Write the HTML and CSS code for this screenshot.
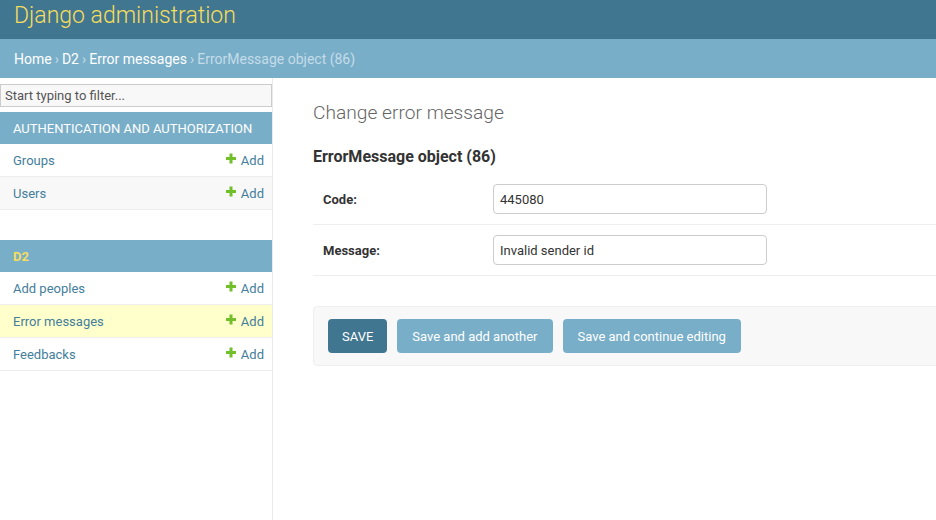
FILE: index.html
```html
<!DOCTYPE html>
<html lang="en">
<head>
<meta charset="utf-8">
<title>Change error message | Django site admin</title>
<link rel="stylesheet" href="styles.css">
</head>
<body>
<div class="header"><span class="brand">Django administration</span></div>
<nav class="breadcrumbs">
  <a href="#">Home</a> <span class="sep">›</span> <a href="#">D2</a> <span class="sep">›</span> <a href="#">Error messages</a> <span class="sep">›</span> <span class="current">ErrorMessage object (86)</span>
</nav>
<div class="main">
  <aside class="sidebar">
    <input class="filter" type="text" placeholder="Start typing to filter...">
    <div class="module">
      <div class="caption">AUTHENTICATION AND AUTHORIZATION</div>
      <div class="row"><a class="model" href="#">Groups</a><a class="add" href="#"><svg width="10" height="11" viewBox="0 0 10 11"><path d="M3.5 0.5h3v3.5H10v3H6.5v3.5h-3V7H0V4h3.5z" fill="#70bf2b"/></svg>Add</a></div>
      <div class="row alt"><a class="model" href="#">Users</a><a class="add" href="#"><svg width="10" height="11" viewBox="0 0 10 11"><path d="M3.5 0.5h3v3.5H10v3H6.5v3.5h-3V7H0V4h3.5z" fill="#70bf2b"/></svg>Add</a></div>
    </div>
    <div class="module">
      <div class="caption current-app">D2</div>
      <div class="row"><a class="model" href="#">Add peoples</a><a class="add" href="#"><svg width="10" height="11" viewBox="0 0 10 11"><path d="M3.5 0.5h3v3.5H10v3H6.5v3.5h-3V7H0V4h3.5z" fill="#70bf2b"/></svg>Add</a></div>
      <div class="row current"><a class="model" href="#">Error messages</a><a class="add" href="#"><svg width="10" height="11" viewBox="0 0 10 11"><path d="M3.5 0.5h3v3.5H10v3H6.5v3.5h-3V7H0V4h3.5z" fill="#70bf2b"/></svg>Add</a></div>
      <div class="row"><a class="model" href="#">Feedbacks</a><a class="add" href="#"><svg width="10" height="11" viewBox="0 0 10 11"><path d="M3.5 0.5h3v3.5H10v3H6.5v3.5h-3V7H0V4h3.5z" fill="#70bf2b"/></svg>Add</a></div>
    </div>
  </aside>
  <div class="content">
    <h1 class="title">Change error message</h1>
    <h2 class="subtitle">ErrorMessage object (86)</h2>
    <div class="form-row"><label class="label">Code:</label><input class="field" type="text" value="445080"></div>
    <div class="form-row"><label class="label">Message:</label><input class="field" type="text" value="Invalid sender id"></div>
    <div class="submit-row">
      <button class="btn default">SAVE</button>
      <button class="btn">Save and add another</button>
      <button class="btn">Save and continue editing</button>
    </div>
  </div>
</div>
</body>
</html>
```
FILE: styles.css
```css
html, body {
  margin: 0;
  padding: 0;
  height: 100%;
  overflow: hidden;
}
body {
  font-family: Roboto, "Open Sans", "Liberation Sans", sans-serif;
  font-size: 14px;
  color: #333;
  background: #fff;
  display: flex;
  flex-direction: column;
}
a { text-decoration: none; }

.header {
  background: #417690;
  height: 39px;
  padding: 0 14px;
  display: flex;
  align-items: center;
  flex-shrink: 0;
}
.brand {
  color: #f5dd5d;
  font-size: 23px;
  font-weight: 300;
  margin-top: -8px;
}

.breadcrumbs {
  background: #79aec8;
  height: 39px;
  padding: 0 14px;
  display: flex;
  align-items: center;
  gap: 3px;
  font-size: 14px;
  color: #c4dce8;
  flex-shrink: 0;
}
.breadcrumbs a { color: #fff; }

.main {
  display: flex;
  flex: 1;
  min-height: 0;
}
.sidebar {
  width: 272px;
  border-right: 1px solid #eaeaea;
  flex-shrink: 0;
  padding-top: 6px;
}
.filter {
  display: block;
  box-sizing: border-box;
  width: 272px;
  height: 23px;
  margin: 0 0 5px 0;
  padding: 2px 4px;
  border: 1px solid #ccc;
  background: #f8f8f8;
  font-family: inherit;
  font-size: 13px;
  color: #333;
}
.filter::placeholder { color: #555; }
.module { margin-bottom: 30px; }
.caption {
  background: #79aec8;
  color: #fff;
  height: 32px;
  padding: 0 13px;
  display: flex;
  align-items: center;
  font-size: 13px;
}
.caption.current-app { color: #f5dd5d; font-weight: 700; }
.row {
  height: 32px;
  border-bottom: 1px solid #eee;
  display: flex;
  align-items: center;
  justify-content: space-between;
  padding: 0 8px 0 13px;
  font-size: 13px;
}
.row.alt { background: #f8f8f8; }
.row.current { background: #ffc; }
.model { color: #447e9b; }
.add {
  color: #447e9b;
  display: flex;
  align-items: center;
  gap: 5px;
}
.add svg { margin-top: -3px; }

.content {
  flex: 1;
  padding: 23px 0 0 40px;
  overflow: hidden;
}
.title {
  margin: 0;
  font-size: 19.2px;
  font-weight: 300;
  color: #666;
  line-height: 24px;
}
.subtitle {
  margin: 22px 0 0;
  font-size: 16px;
  font-weight: 700;
  color: #333;
  line-height: 20px;
}
.form-row {
  display: flex;
  align-items: center;
  padding: 10px;
  border-bottom: 1px solid #eee;
}
.subtitle + .form-row { margin-top: 7px; }
.label {
  width: 170px;
  font-size: 13px;
  font-weight: 700;
  color: #333;
}
.field {
  box-sizing: border-box;
  width: 274px;
  height: 30px;
  border: 1px solid #ccc;
  border-radius: 4px;
  padding: 5px 6px;
  font-family: inherit;
  font-size: 13px;
  color: #333;
}
.submit-row {
  margin: 30px -10px 0 0;
  height: 60px;
  box-sizing: border-box;
  padding: 0 14px;
  background: #f8f8f8;
  border: 1px solid #eee;
  border-radius: 4px;
  display: flex;
  align-items: center;
  gap: 10px;
}
.btn {
  height: 34px;
  padding: 0 15px;
  border: none;
  border-radius: 4px;
  background: #79aec8;
  color: #fff;
  font-family: inherit;
  font-size: 13px;
}
.btn.default { background: #417690; padding: 0 14px; }
```
